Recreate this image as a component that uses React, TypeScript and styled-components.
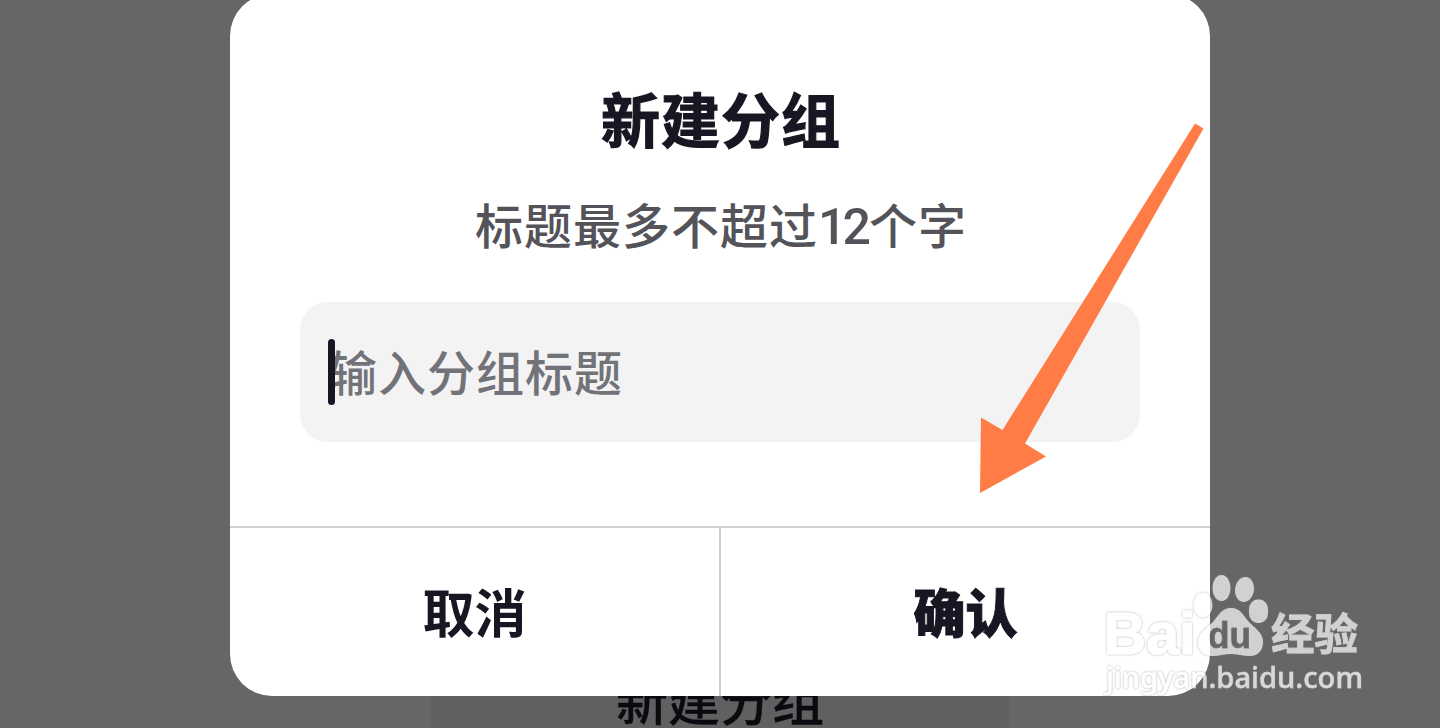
import React, {useState} from "react";
import styled, {createGlobalStyle} from "styled-components";

const fontStack = `"Noto Sans CJK SC", "Noto Sans", sans-serif`;
const ink = '#161722';
const line = '#cfcfcf';

const GlobalStyle = createGlobalStyle`
  * {
    box-sizing: border-box;
  }

  body {
    margin: 0;
    background: #666666;
    font-family: ${fontStack};
  }`;

const Page = styled.main`
  position: relative;
  display: flex;
  flex-direction: column;
  align-items: center;
  width: 1440px;
  height: 728px;
  overflow: hidden;
  background: #666666;
`;

const Dialog = styled.section`
  display: flex;
  flex-direction: column;
  flex: none;
  width: 980px;
  height: 702px;
  margin-top: -6px;
  border-radius: 42px;
  background: #ffffff;
  overflow: hidden;
`;

const DialogBody = styled.div`
  display: flex;
  flex-direction: column;
  flex: 1;
  padding: 80px 70px 0;
  text-align: center;
`;

const Title = styled.h1`
  margin: 0 0 0 2px;
  font-size: 59px;
  letter-spacing: 1px;
  line-height: 88px;
  font-weight: bold;
  color: ${ink};
  -webkit-text-stroke: 1.2px ${ink};
`;

const Hint = styled.p`
  margin: 25px 0 0 2px;
  font-size: 48px;
  letter-spacing: 1px;
  line-height: 72px;
  font-weight: 500;
  color: #535359;
`;

const Digits = styled.span`
  padding-right: 2px;
  font-family: Roboto, sans-serif;
  font-size: 50px;
  line-height: 1;
  letter-spacing: -4px;
`;

const Field = styled.label`
  display: flex;
  align-items: center;
  height: 140px;
  margin-top: 43px;
  padding: 0 0 1px 28px;
  border-radius: 28px;
  background: #f3f3f3;
`;

const Caret = styled.span`
  flex: none;
  width: 7px;
  height: 66px;
  margin-right: -6px;
  border-radius: 4px;
  background: ${ink};
  z-index: 1;
`;

const Input = styled.input`
  flex: 1;
  height: 75px;
  padding: 0 0 3px;
  border: 0;
  outline: 0;
  background: transparent;
  font-family: ${fontStack};
  font-size: 48px;
  letter-spacing: 1px;
  line-height: 72px;
  font-weight: 500;
  color: ${ink};

  &::placeholder {
    color: #727279;
    opacity: 1;
  }`;

const Actions = styled.footer`
  display: flex;
  height: 170px;
  border-top: 2px solid ${line};
`;

const Action = styled.button<{ $primary?: boolean }>`
  flex: 1;
  padding: 0 0 3px;
  border: 0;
  border-left: ${props => props.$primary ? `2px solid ${line}` : '0'};
  background: transparent;
  font-family: ${fontStack};
  font-size: 52px;
  line-height: 76px;
  font-weight: ${props => props.$primary ? 900 : 700};
  color: ${ink};
  -webkit-text-stroke: ${props => props.$primary ? '1px' : '0'} ${ink};
`;

const PageButton = styled.div`
  display: flex;
  flex: none;
  justify-content: center;
  align-items: flex-end;
  width: 578px;
  height: 32px;
  overflow: hidden;
  background: #606060;
  font-size: 52px;
  line-height: 58px;
  font-weight: 500;
  color: #0a0b10;
  -webkit-text-stroke: 0.3px #0a0b10;
`;

const Overlay = styled.svg`
  position: absolute;
  pointer-events: none;
`;

const PointerSvg = styled(Overlay)`
  left: 970px;
  top: 110px;
`;

const WatermarkSvg = styled(Overlay)`
  left: 1090px;
  top: 565px;
`;

const Pointer = () => (
    <PointerSvg width="245" height="395" viewBox="970 110 245 395">
        <path d="M1195 123.5L1203.500 128.500L1025 443.500L1046 456.500L980 493L981 417.500L1002.500 430Z" fill="#ff7c46"/>
    </PointerSvg>
);

const Watermark = () => (
    <WatermarkSvg width="290" height="140" viewBox="1090 565 290 140">
        <defs>
            <filter id="halo" x="-10%" y="-10%" width="120%" height="120%">
                <feDropShadow dx="0" dy="0" stdDeviation="1.1" floodColor="#777" floodOpacity="0.85"/>
            </filter>
            <mask id="cut" maskUnits="userSpaceOnUse" x="1090" y="565" width="290" height="140">
                <rect x="1090" y="565" width="290" height="140" fill="#fff"/>
                <text x="1208" y="647.500" fontSize="36" fontWeight="bold" fontFamily="Liberation Sans" textLength="43"
                      lengthAdjust="spacingAndGlyphs" fill="#000" stroke="#000" strokeWidth="0.8">du</text>
            </mask>
        </defs>
        <g filter="url(#halo)" opacity="0.7" fill="#fff">
            <text x="1103.500" y="654" fontSize="59" fontWeight="bold" fontFamily="Liberation Sans" textLength="92"
                  lengthAdjust="spacingAndGlyphs" stroke="#fff" strokeWidth="1.2">Bai</text>
            <ellipse cx="1203" cy="605" rx="9.500" ry="12.500"/>
            <ellipse cx="1221.500" cy="588" rx="9" ry="13"/>
            <ellipse cx="1244.500" cy="589.500" rx="9.500" ry="12.500" transform="rotate(8 1244.500 589.500)"/>
            <rect x="1249" y="599.500" width="19" height="23.500" rx="8.500" ry="10"/>
            <path mask="url(#cut)"
                  d="M1231 608C1222 608 1218 616 1213 622C1206 629 1198 633 1198 643C1198 651 1204 656 1212 656C1219 656 1224 654 1231 654C1238 654 1243 656 1250 656C1258 656 1263 650 1263 642C1263 632 1254 628 1248 621C1243 615 1240 608 1231 608Z"/>
            <text x="1271" y="650" fontSize="43.500" fontWeight="bold" fontFamily="Noto Sans CJK SC"
                  stroke="#fff" strokeWidth="0.8">经验</text>
        </g>
        <g filter="url(#halo)" opacity="0.75" fill="#fff">
            <text x="1106" y="688" fontSize="29.500" fontWeight="500" fontFamily="Noto Sans" textLength="257"
                  lengthAdjust="spacingAndGlyphs" stroke="#fff" strokeWidth="0.400">jingyan.baidu.com</text>
        </g>
    </WatermarkSvg>
);

const App: React.FunctionComponent = () => {
    const [name, setName] = useState('');

    return (
        <Page>
            <GlobalStyle/>
            <Dialog>
                <DialogBody>
                    <Title>新建分组</Title>
                    <Hint>标题最多不超过<Digits>12</Digits>个字</Hint>
                    <Field>
                        <Caret/>
                        <Input value={name} placeholder="输入分组标题" onChange={e => setName(e.target.value)}/>
                    </Field>
                </DialogBody>
                <Actions>
                    <Action>取消</Action>
                    <Action $primary>确认</Action>
                </Actions>
            </Dialog>
            <PageButton>新建分组</PageButton>
            <Pointer/>
            <Watermark/>
        </Page>
    );
};

export default App;
